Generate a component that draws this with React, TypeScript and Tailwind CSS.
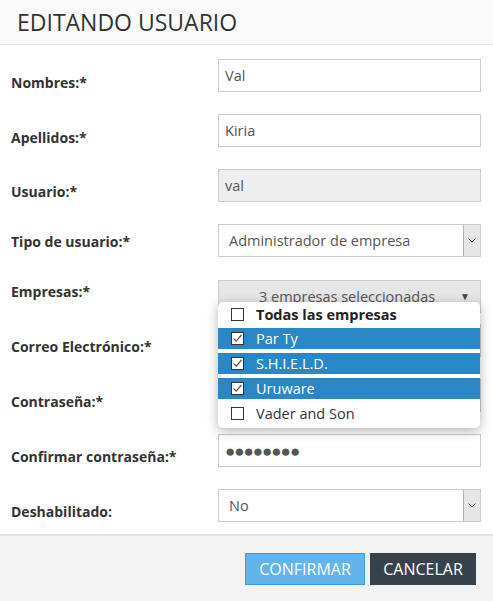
import React from 'react';

const font = { fontFamily: '"Open Sans", "Liberation Sans", sans-serif' };

function Chevron() {
  return (
    <div className="w-[17px] h-full bg-[#e6e6e6] border-l border-[#b5b5b5] flex items-center justify-center">
      <svg width="8" height="5" viewBox="0 0 8 5">
        <path d="M0.5 0.5 L4 4 L7.5 0.5" fill="none" stroke="#555" strokeWidth="1" />
      </svg>
    </div>
  );
}

function Check({ on }: { on: boolean }) {
  return (
    <div className="w-[13px] h-[13px] border border-[#333] bg-white flex items-center justify-center shrink-0">
      {on && (
        <svg width="11" height="11" viewBox="0 0 11 11">
          <path d="M1.5 5.5 L4.2 8.2 L9.5 2" fill="none" stroke="#555" strokeWidth="1.2" />
        </svg>
      )}
    </div>
  );
}

const rowCls = 'flex items-start h-[33px]';
const labelCls = 'w-[218px] shrink-0 pl-[11px] text-[14px] leading-[20px] font-bold text-[#333] whitespace-nowrap';
const inputCls = 'w-[263px] h-[33px] border border-[#ccc] flex items-center text-[14.5px] text-[#555]';

export default function App() {
  const empresas = [
    { name: 'Par Ty', on: true },
    { name: 'S.H.I.E.L.D.', on: true },
    { name: 'Uruware', on: true },
    { name: 'Vader and Son', on: false },
  ];

  return (
    <div className="w-[493px] h-[601px] bg-white flex flex-col overflow-hidden" style={font}>
      <div className="h-[45px] bg-[#fafafa] border-b border-[#e6e6e6] flex items-center pl-[17px]">
        <span className="text-[23px] text-[#333] leading-none">EDITANDO USUARIO</span>
      </div>

      <div className="flex flex-col pt-[14px] pb-[12px]">
        <div className={rowCls}>
          <div className={`${labelCls} pt-[14px]`}>Nombres:*</div>
          <div className={`${inputCls} pl-[6px]`}>Val</div>
        </div>
        <div className={`${rowCls} mt-[22px]`}>
          <div className={`${labelCls} pt-[14px]`}>Apellidos:*</div>
          <div className={`${inputCls} pl-[6px]`}>Kiria</div>
        </div>
        <div className={`${rowCls} mt-[22px]`}>
          <div className={`${labelCls} pt-[13px]`}>Usuario:*</div>
          <div className={`${inputCls} pl-[6px] bg-[#eeeeee]`}>val</div>
        </div>
        <div className={`${rowCls} mt-[22px]`}>
          <div className={`${labelCls} pt-[8px]`}>Tipo de usuario:*</div>
          <div className={`${inputCls} justify-between`}>
            <span className="pl-[10px]">Administrador de empresa</span>
            <Chevron />
          </div>
        </div>
        <div className={`${rowCls} mt-[23px]`}>
          <div className={`${labelCls} pt-[2px]`}>Empresas:*</div>
          <div className="relative">
            <div className={`${inputCls} bg-[#e6e6e6] justify-between`}>
              <span className="pl-[40px]">3 empresas seleccionadas</span>
              <span className="pr-[10px] text-[10px] text-[#444]">▼</span>
            </div>
            <div className="absolute z-10 left-0 top-[22px] w-[262px] bg-white rounded-[5px] shadow-[0_3px_12px_rgba(0,0,0,0.3)] pt-[1px] pb-[2px]">
              <div className="h-[23px] flex items-center pl-[13px] gap-[12px] text-[14.5px] font-bold text-[#222]">
                <Check on={false} />
                <span>Todas las empresas</span>
              </div>
              {empresas.map(e => (
                <div key={e.name} className="h-[25px] flex flex-col justify-center">
                  <div className={`h-[21px] flex items-center pl-[13px] gap-[12px] text-[14.5px] ${e.on ? 'bg-[#2a87c6] text-white' : 'text-[#333]'}`}>
                    <Check on={e.on} />
                    <span>{e.name}</span>
                  </div>
                </div>
              ))}
            </div>
          </div>
        </div>
        <div className={`${rowCls} mt-[11px]`}>
          <div className={`${labelCls} pt-[13px]`}>Correo Electrónico:*</div>
          <div className={`${inputCls} pl-[6px]`}></div>
        </div>
        <div className={`${rowCls} mt-[22px]`}>
          <div className={`${labelCls} pt-[13px]`}>Contraseña:*</div>
          <div className={`${inputCls} pl-[6px]`}></div>
        </div>
        <div className={`${rowCls} mt-[22px]`}>
          <div className={`${labelCls} pt-[13px]`}>Confirmar contraseña:*</div>
          <div className={`${inputCls} pl-[6px] text-[#444] text-[17px] tracking-[-1px]`}>●●●●●●●●</div>
        </div>
        <div className={`${rowCls} mt-[22px]`}>
          <div className={`${labelCls} pt-[13px]`}>Deshabilitado:</div>
          <div className={`${inputCls} justify-between`}>
            <span className="pl-[10px]">No</span>
            <Chevron />
          </div>
        </div>
      </div>

      <div className="flex-1 bg-[#f3f3f3] border-t-2 border-[#e0e0e0] flex justify-end items-start pt-[17px] pr-[17px] gap-[5px]">
        <button className="w-[120px] h-[32px] bg-[#63b3ed] border border-[#3d9be3] text-white text-[16px] leading-none">CONFIRMAR</button>
        <button className="w-[106px] h-[32px] bg-[#38424d] text-white text-[16px] leading-none">CANCELAR</button>
      </div>
    </div>
  );
}
